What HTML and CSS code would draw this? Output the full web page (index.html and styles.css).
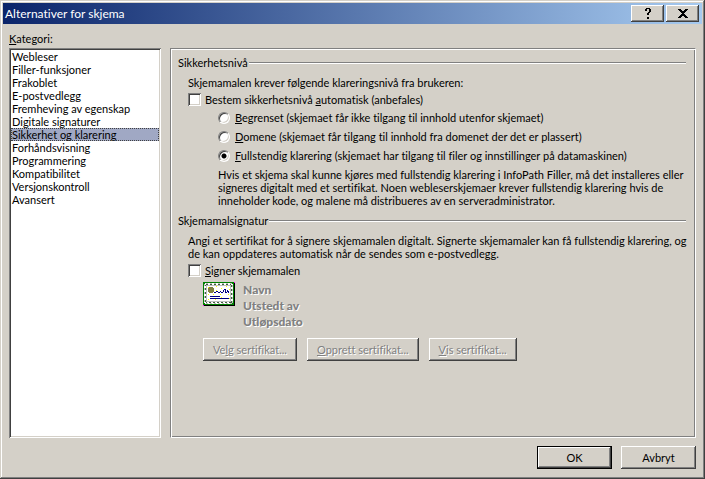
FILE: index.html
```html
<!DOCTYPE html>
<html lang="nb">
<head>
<meta charset="utf-8">
<title>Alternativer for skjema</title>
<link rel="stylesheet" href="styles.css">
</head>
<body>
<form class="dialog">
  <header class="titlebar">
    <h1>Alternativer for skjema</h1>
    <button type="button" class="caption-button" aria-label="Hjelp">
      <svg width="6" height="11" viewBox="0 0 6 11" shape-rendering="crispEdges"><path d="M1 0h4v1h1v3h-1v1h-1v2h-2v-2h1v-1h1v-3h-2v2h-2v-2h1zM2 9h2v2h-2z"/></svg>
    </button>
    <button type="button" class="caption-button" aria-label="Lukk">
      <svg width="10" height="9" viewBox="0 0 10 9" shape-rendering="crispEdges"><path d="M0 0h3v1h1v1h2v-1h1v-1h3v1h-1v1h-1v1h-1v1h-1v1h1v1h1v1h1v1h1v1h-3v-1h-1v-1h-2v1h-1v1h-3v-1h1v-1h1v-1h1v-1h1v-1h-1v-1h-1v-1h-1v-1h-1z"/></svg>
    </button>
  </header>

  <main class="content">
    <div class="category">
      <label for="category"><u>K</u>ategori:</label>
      <select id="category" class="list" size="12">
        <option>Webleser</option>
        <option>Filler-funksjoner</option>
        <option>Frakoblet</option>
        <option>E-postvedlegg</option>
        <option>Fremheving av egenskap</option>
        <option>Digitale signaturer</option>
        <option selected>Sikkerhet og klarering</option>
        <option>Forhåndsvisning</option>
        <option>Programmering</option>
        <option>Kompatibilitet</option>
        <option>Versjonskontroll</option>
        <option>Avansert</option>
      </select>
    </div>

    <div class="panel">
      <section>
        <h2>Sikkerhetsnivå</h2>
        <div class="section-body">
          <p>Skjemamalen krever følgende klareringsnivå fra brukeren:</p>
          <label class="check"><input type="checkbox"><span>Bestem sikkerhetsnivå <u>a</u>utomatisk (anbefales)</span></label>
          <div class="levels">
            <label class="radio"><input type="radio" name="level"><span><u>B</u>egrenset (skjemaet får ikke tilgang til innhold utenfor skjemaet)</span></label>
            <label class="radio"><input type="radio" name="level"><span><u>D</u>omene (skjemaet får tilgang til innhold fra domenet der det er plassert)</span></label>
            <label class="radio"><input type="radio" name="level" checked><span><u>F</u>ullstendig klarering (skjemaet har tilgang til filer og innstillinger på datamaskinen)</span></label>
            <p>Hvis et skjema skal kunne kjøres med fullstendig klarering i InfoPath Filler, må det installeres eller<br>signeres digitalt med et sertifikat. Noen webleserskjemaer krever fullstendig klarering hvis de<br>inneholder kode, og malene må distribueres av en serveradministrator.</p>
          </div>
        </div>
      </section>

      <section>
        <h2>Skjemamalsignatur</h2>
        <div class="section-body">
          <p>Angi et sertifikat for å signere skjemamalen digitalt. Signerte skjemamaler kan få fullstendig klarering, og<br>de kan oppdateres automatisk når de sendes som e-postvedlegg.</p>
          <label class="check"><input type="checkbox"><span><u>S</u>igner skjemamalen</span></label>
          <div class="certificate">
            <svg width="32" height="24" viewBox="0 0 32 24" shape-rendering="crispEdges" aria-hidden="true">
              <path fill="#000" d="M1 1h31v23h-31z"/>
              <path fill="#008000" d="M0 0h31v23h-31z"/>
              <path fill="#f0f" d="M0 23h1v1h-1zM31 0h1v1h-1z"/>
              <path fill="#fff" d="M2 1h27v1h1v19h-1v1h-27v-1h-1v-19h1z"/>
              <path fill="none" stroke="#c0c0c0" stroke-dasharray="2 2" d="M3 1.500h26M29.500 3v18M29 21.500h-26M1.500 20v-18"/>
              <path fill="none" stroke="#406040" stroke-dasharray="2 2" d="M3 2.500h25M28.500 3v18M28 20.500h-25M2.500 20v-17"/>
              <path fill="none" stroke="#c0c0c0" d="M3.500 3.500h24v16h-24z"/>
              <path fill="#ff0" d="M5 5h1v1h-1zM13 4h1v1h-1zM18 6h1v1h-1zM23 4h1v1h-1zM26 7h1v1h-1zM13 8h1v1h-1zM5 12h1v1h-1zM10 12h1v1h-1zM17 12h1v1h-1zM25 12h1v1h-1zM5 17h1v1h-1zM12 17h1v1h-1zM18 15h1v1h-1zM26 16h1v1h-1z"/>
              <path fill="#808040" d="M6 5h4v1h1v4h-1v1h-4v-1h-1v-4h1z"/>
              <path fill="none" stroke="#000080" d="M11 10.500h2M13 9.500h2M15 10.500h2M17 9.500h1M18 10.500h2M20.500 10v-2M21.500 8v-1M22 7.500h1M22.500 8v3M23 10.500h1M24.500 10v-2M25.500 9v2M7 14.500h10M7 16.500h19"/>
            </svg>
            <div class="certificate-fields">
              <span>Navn</span>
              <span>Utstedt av</span>
              <span>Utløpsdato</span>
            </div>
          </div>
          <div class="certificate-actions">
            <button type="button" disabled><span>Ve<u>l</u>g sertifikat...</span></button>
            <button type="button" disabled><span><u>O</u>pprett sertifikat...</span></button>
            <button type="button" disabled><span><u>V</u>is sertifikat...</span></button>
          </div>
        </div>
      </section>
    </div>
  </main>

  <footer class="actions">
    <button type="submit" class="default">OK</button>
    <button type="button">Avbryt</button>
  </footer>
</form>
</body>
</html>
```

FILE: styles.css
```css
:root {
  --face: #d4d0c8;
  --shadow: #808080;
  --dark: #404040;
  --light: #fff;
}

* {
  box-sizing: border-box;
}

body {
  margin: 0;
  background: var(--face);
  color: #000;
  font: 11px/13px Tahoma, Lato, sans-serif;
  font-variant-ligatures: none;
}

h1, h2, p {
  margin: 0;
  font-size: inherit;
  font-weight: normal;
}

button, select, input {
  margin: 0;
  font: inherit;
  color: inherit;
}

u {
  text-underline-offset: 1px;
  text-decoration-thickness: 1px;
  text-decoration-skip-ink: none;
}

.dialog {
  display: flex;
  flex-direction: column;
  min-height: 100vh;
  padding: 3px;
  box-shadow: inset -1px -1px var(--dark), inset 1px 1px var(--face), inset -2px -2px var(--shadow), inset 2px 2px var(--light);
}

.titlebar {
  display: flex;
  align-items: center;
  gap: 2px;
  height: 21px;
  padding: 0 3px 0 2px;
  background: linear-gradient(90deg, #0a246a, #a6caf0);
  color: #fff;
}

.titlebar h1 {
  flex: 1;
  font-size: 12px;
}

button {
  padding: 0;
  border: 0;
  border-radius: 0;
  background: var(--face);
  box-shadow: inset -1px -1px var(--dark), inset 1px 1px var(--light), inset -2px -2px var(--shadow);
}

.caption-button {
  display: grid;
  place-items: center;
  width: 33px;
  height: 17px;
}

.content {
  flex: 1;
  display: flex;
  gap: 9px;
  padding: 8px 6px 0;
}

.category {
  flex: none;
  display: flex;
  flex-direction: column;
  gap: 3px;
  width: 152px;
}

.list {
  flex: 1;
  width: 100%;
  padding: 2px;
  border: 0;
  border-radius: 0;
  outline: 0;
  background: #fff;
  box-shadow: inset 1px 1px var(--shadow), inset -1px -1px var(--light), inset 2px 2px var(--dark), inset -2px -2px var(--face);
  overflow: hidden;
}

.list option {
  min-height: 13px;
  padding: 0 1px;
  line-height: 13px;
  color: #000;
}

.list option:checked {
  background: linear-gradient(#a0a8c4, #a0a8c4);
  outline: 1px dotted #404040;
  outline-offset: -1px;
}

.panel {
  flex: 1;
  min-width: 0;
  display: flex;
  flex-direction: column;
  gap: 7px;
  margin-top: 16px;
  padding: 7px 9px 8px 7px;
  border: 1px solid var(--shadow);
  border-right-color: var(--light);
  border-bottom-color: var(--light);
  box-shadow: inset 1px 1px var(--light), inset -1px -1px var(--shadow);
}

h2 {
  display: flex;
  align-items: center;
  gap: 1px;
}

h2::after {
  content: "";
  flex: 1;
  height: 2px;
  background: linear-gradient(var(--shadow) 50%, var(--light) 50%);
}

.section-body {
  display: flex;
  flex-direction: column;
  padding: 7px 0 0 10px;
  white-space: nowrap;
}

.check, .radio {
  display: flex;
  align-items: center;
}

.check {
  gap: 4px;
  margin-top: 4px;
}

.check input {
  appearance: none;
  width: 13px;
  height: 13px;
  background: #fff;
  box-shadow: inset 1px 1px var(--shadow), inset -1px -1px var(--light), inset 2px 2px var(--dark), inset -2px -2px var(--face);
}

.levels {
  display: flex;
  flex-direction: column;
  gap: 6px;
  padding: 5px 0 0 30px;
}

.radio {
  gap: 5px;
}

.radio input {
  appearance: none;
  width: 12px;
  height: 12px;
  border: 1px solid;
  border-color: var(--shadow) var(--light) var(--light) var(--shadow);
  border-radius: 50%;
  background: #fff;
  box-shadow: inset 1px 1px var(--dark), inset -1px -1px var(--face);
}

.radio input:checked {
  background: radial-gradient(circle, #000 2px, #fff 3px);
}

.certificate {
  display: flex;
  gap: 8px;
  padding: 5px 0 0 15px;
}

.certificate-fields {
  display: flex;
  flex-direction: column;
  font-size: 12px;
  font-weight: 900;
  line-height: 16px;
  color: var(--shadow);
  text-shadow: 1px 1px var(--light);
}

.certificate-actions {
  display: flex;
  gap: 10px;
  padding: 8px 0 0 15px;
}

.certificate-actions button {
  height: 23px;
  padding: 0 10px;
  color: var(--shadow);
  text-shadow: 1px 1px var(--light);
}

.actions {
  display: flex;
  justify-content: flex-end;
  gap: 9px;
  padding: 8px 6px 7px;
}

.actions button {
  width: 75px;
  height: 23px;
}

.actions .default {
  border: 1px solid #000;
}
```
